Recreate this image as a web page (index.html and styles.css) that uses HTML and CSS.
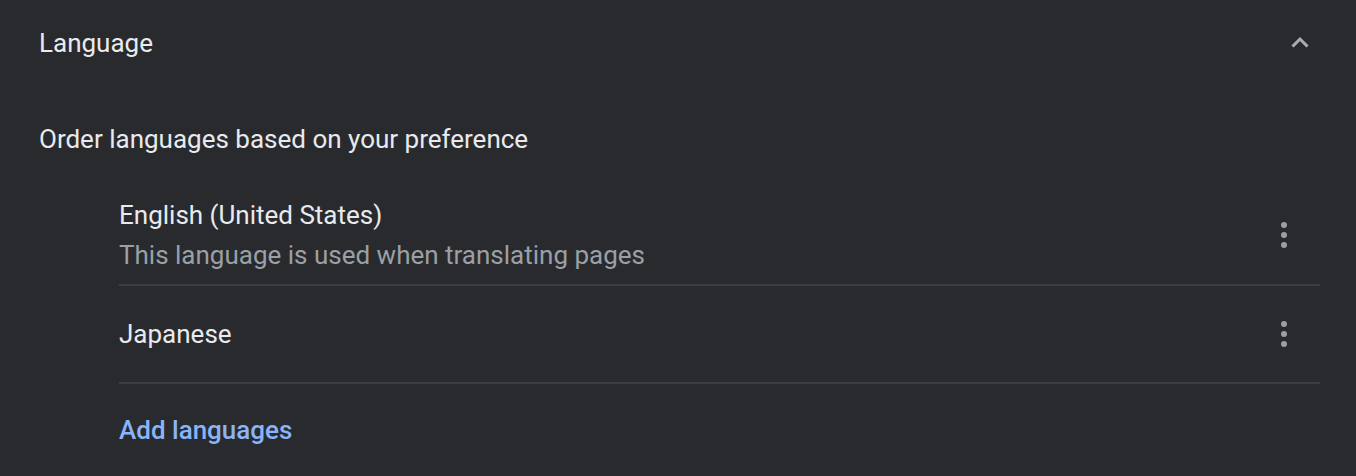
FILE: index.html
```html
<!DOCTYPE html>
<html>
<head>
<meta charset="utf-8">
<link rel="stylesheet" href="styles.css">
</head>
<body>
<div class="section">
  <div class="header">
    <span class="title">Language</span>
    <svg class="chevron" width="18" height="12" viewBox="0 0 18 12"><polyline points="1.5,10.5 9,3 16.5,10.5" fill="none" stroke="#a9adb1" stroke-width="3"/></svg>
  </div>
  <div class="subtitle">Order languages based on your preference</div>
  <div class="list">
    <div class="item">
      <div class="text">
        <div class="primary">English (United States)</div>
        <div class="secondary">This language is used when translating pages</div>
      </div>
      <svg class="dots" width="6" height="26" viewBox="0 0 6 26"><circle cx="3" cy="3" r="3"/><circle cx="3" cy="13" r="3"/><circle cx="3" cy="23" r="3"/></svg>
    </div>
    <div class="item">
      <div class="text">
        <div class="primary">Japanese</div>
      </div>
      <svg class="dots" width="6" height="26" viewBox="0 0 6 26"><circle cx="3" cy="3" r="3"/><circle cx="3" cy="13" r="3"/><circle cx="3" cy="23" r="3"/></svg>
    </div>
    <div class="add">Add languages</div>
  </div>
</div>
</body>
</html>
```
FILE: styles.css
```css
html, body {
  margin: 0;
  padding: 0;
  background: #292a2d;
  height: 100%;
}
body {
  font-family: Roboto, "Liberation Sans", sans-serif;
  font-size: 26px;
  color: #e8eaed;
}
.section {
  padding: 0 36px 0 39px;
}
.header {
  height: 86px;
  display: flex;
  align-items: center;
  justify-content: space-between;
}
.title {
  line-height: 40px;
}
.chevron {
  margin-right: 11px;
  margin-top: -2px;
}
.subtitle {
  line-height: 40px;
  padding-top: 33px;
  padding-bottom: 27px;
}
.list {
  margin-left: 80px;
}
.item {
  display: flex;
  align-items: center;
  justify-content: space-between;
  min-height: 78px;
  padding: 9px 0;
  border-bottom: 2px solid #3c3d40;
}
.primary, .secondary {
  line-height: 40px;
}
.secondary {
  color: #9aa0a6;
}
.dots {
  fill: #9aa0a6;
  margin-right: 33px;
}
.add {
  margin-top: 26px;
  line-height: 40px;
  color: #8ab4f8;
  font-weight: 500;
}
```
